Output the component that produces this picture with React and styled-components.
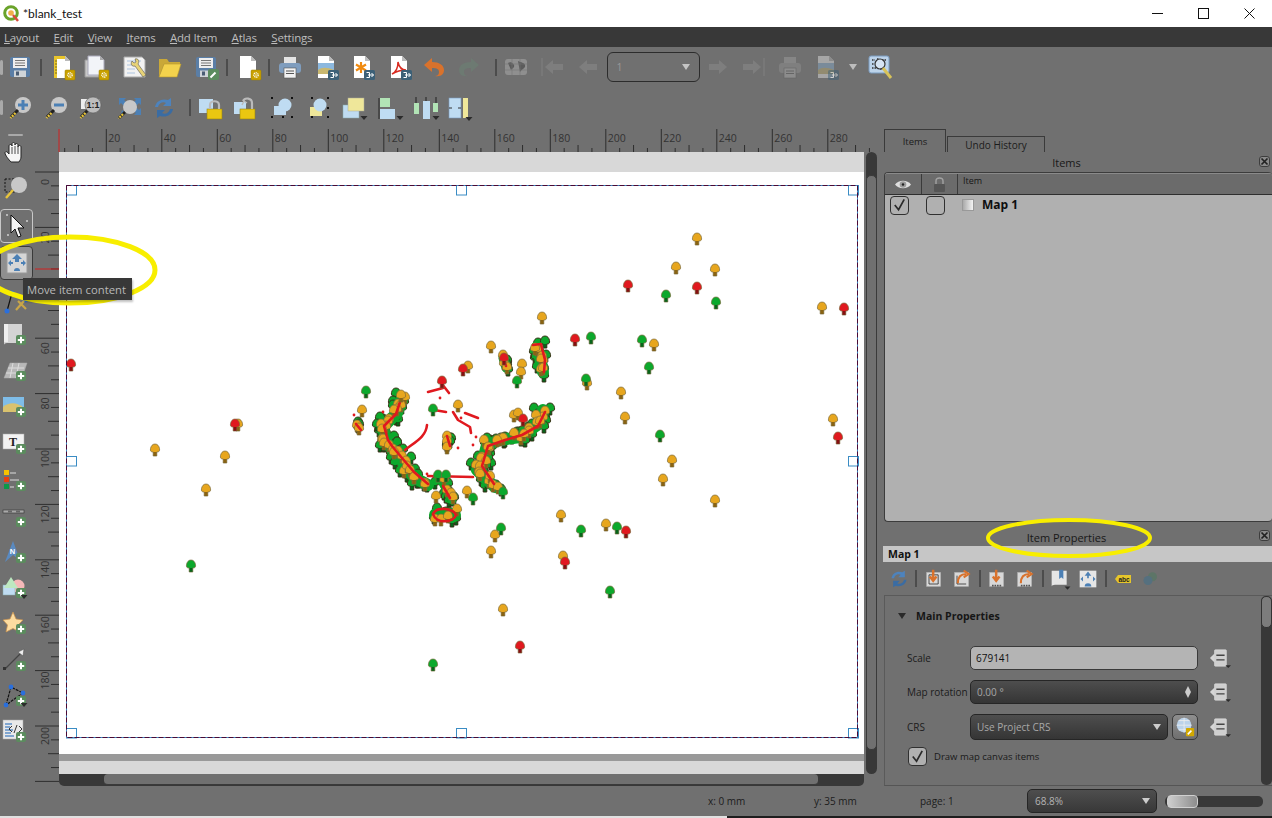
import React from "react";
import styled, { createGlobalStyle } from "styled-components";

const Global = createGlobalStyle`
  html, body { margin: 0; padding: 0; background: #707070; }
  body { font-family: "Open Sans", "Noto Sans", "Liberation Sans", sans-serif; }
  * { box-sizing: border-box; }
`;

const Root = styled.div`
  position: relative; width: 1272px; height: 818px; overflow: hidden;
  background: #707070; display: flex; flex-direction: column;
`;
const TitleBar = styled.header`
  height: 27px; background: #fff; display: flex; align-items: center; padding-left: 3px; flex: none;
`;
const TitleText = styled.span`
  font-size: 12px; color: #111; margin-left: 3px; flex: 1; font-family: "Lato", "Open Sans", sans-serif;
`;
const WinButton = styled.div`
  width: 46px; height: 27px; display: flex; align-items: center; justify-content: center;
`;
const MenuBar = styled.nav`
  height: 20px; background: #383838; display: flex; align-items: center; gap: 14.5px; padding-left: 4px; flex: none;
`;
const MenuItem = styled.span`
  font-size: 11.5px; color: #bdbdbd; letter-spacing: -0.2px;
  &::first-letter { text-decoration: underline; }
`;
const ToolRow = styled.div`
  height: ${(p) => p.$h}px; display: flex; align-items: center; flex: none;
`;
const ToolCol = styled.div`
  width: 35px; flex: none; display: flex; flex-direction: column; align-items: flex-start; padding-left: 3px;
`;
const Cell = styled.div`
  width: ${(p) => p.$w}px; height: ${(p) => p.$h}px; flex: none;
  margin-left: ${(p) => p.$ml || 0}px; margin-top: ${(p) => p.$mt || 0}px;
  display: flex; align-items: center; justify-content: center;
`;
const Sep = styled.div`
  width: 2px; height: 17px; background: #4c4c4c; flex: none; margin-left: ${(p) => p.$ml}px;
`;
const Handle = styled.div`
  width: ${(p) => p.$w}px; height: ${(p) => p.$h}px; background: #a9a9a9; border-radius: 2px; flex: none;
  margin-left: ${(p) => p.$ml || 0}px; margin-top: ${(p) => p.$mt || 0}px;
`;
const PageCombo = styled.div`
  width: 93px; height: 30px; flex: none; margin-left: ${(p) => p.$ml}px; border: 1px solid #2c2c2c; border-radius: 6px;
  display: flex; align-items: center; justify-content: space-between; padding: 0 9px;
  font-size: 10.5px; color: #999;
`;
const ActiveTool = styled.div`
  width: 33px; height: 34px; flex: none; margin-left: -3px; margin-top: ${(p) => p.$mt || 0}px;
  border: 1px solid ${(p) => p.$border}; border-radius: 4px; background: ${(p) => p.$bg};
  display: flex; align-items: center; justify-content: center;
`;
const Body = styled.div`
  height: 658px; display: flex; flex: none;
`;
const Work = styled.div`
  width: 848px; flex: none; display: flex; flex-direction: column;
`;
const RulerTop = styled.svg`
  display: block; width: 848px; height: 24px; flex: none;
`;
const WorkMid = styled.div`
  display: flex; flex: none; height: 622px;
`;
const RulerLeft = styled.svg`
  display: block; width: 24px; height: 634px; flex: none;
`;
const Canvas = styled.div`
  width: 805px; height: 622px; flex: none; display: flex; flex-direction: column;
`;
const Band = styled.div`
  height: ${(p) => p.$h}px; background: ${(p) => p.$c}; flex: none;
`;
const Page = styled.div`
  height: 582px; background: #fff; flex: none;
`;
const MapSvg = styled.svg`
  display: block; width: 805px; height: 582px;
`;
const VScrollTrack = styled.div`
  width: 11px; height: 622px; flex: none; margin-left: 2px; background: #383838; border-radius: 6px; padding-top: 23px;
`;
const VThumb = styled.div`
  height: 575px; background: #707070; border: 1px solid #3a3a3a; border-radius: 5px;
`;
const HRow = styled.div`
  display: flex; height: 12px; margin-left: 24px; flex: none;
`;
const HTrack = styled.div`
  width: 805px; height: 12px; background: #383838; border-radius: 0 0 5px 5px; padding-left: 45px;
`;
const HThumb = styled.div`
  width: 714px; height: 11px; background: #707070; border-radius: 4px; border-bottom: 1px solid #3a3a3a;
`;
const Dock = styled.aside`
  width: 389px; flex: none; display: flex; flex-direction: column;
`;
const Tabs = styled.div`
  height: 24px; display: flex; align-items: flex-end; padding-left: 1px; flex: none;
`;
const Tab = styled.div`
  width: ${(p) => p.$w}px; height: ${(p) => p.$h}px; border: 1px solid #3a3a3a; border-bottom: 0; margin-right: ${(p) => p.$mr || 0}px;
  display: flex; align-items: center; justify-content: center; font-size: ${(p) => p.$fs}px; color: #1c1c1c;
`;
const DockTitle = styled.div`
  height: ${(p) => p.$h}px; display: flex; align-items: center; justify-content: center; position: relative; flex: none;
  font-size: 11px; color: #181818; padding-right: 22px; padding-top: ${(p) => p.$pt || 0}px;
`;
const CloseBtn = styled.div`
  position: absolute; right: 2px; top: ${(p) => p.$t}px; width: 11px; height: 11px; border: 1px solid #3d3d3d; border-radius: 3px;
  background: #8a8a8a; display: flex; align-items: center; justify-content: center;
`;
const ListBox = styled.div`
  height: 350px; margin-left: 1px; flex: none; background: #b0b0b0; border: 1px solid #3c3c3c; border-right: 0;
  border-radius: 4px; overflow: hidden; display: flex; flex-direction: column;
`;
const ListHead = styled.div`
  height: 22px; flex: none; background: #6b6b6b; display: grid; grid-template-columns: 37px 36px 1fr;
  border-bottom: 1px solid #2e2e2e; border-top: 1px solid #8a8a8a;
`;
const HeadCell = styled.div`
  border-right: 1px solid #3a3a3a; display: flex; align-items: ${(p) => (p.$text ? "flex-start" : "center")}; justify-content: ${(p) => (p.$text ? "flex-start" : "center")};
  font-size: 9px; color: #161616; padding-left: ${(p) => (p.$text ? "5px" : "0")};
  &:last-child { border-right: 0; }
`;
const ListRow = styled.div`
  display: flex; align-items: center; height: 20px; padding-left: 4px;
`;
const Check = styled.div`
  width: ${(p) => p.$s}px; height: ${(p) => p.$s}px; border: 1px solid #303030; border-radius: 4px;
  display: flex; align-items: center; justify-content: center; flex: none; margin-left: ${(p) => p.$ml || 0}px;
  background: ${(p) => p.$bg || "transparent"};
`;
const MapIconBox = styled.div`
  width: 12px; height: 12px; margin-left: 17px; flex: none; border: 1px solid #999;
  background: linear-gradient(90deg, #aaa, #f4f4f4);
`;
const RowLabel = styled.span`
  font-size: 12px; font-weight: 700; color: #0e0e0e; margin-left: 8px; margin-bottom: 2px; font-family: "Open Sans", sans-serif;
`;
const MapBand = styled.div`
  height: 16px; flex: none; background: #c6c6c6; font-size: 10.5px; font-weight: 700; color: #111; display: flex; align-items: center; padding-left: 5px;
`;
const PropBar = styled.div`
  height: 33px; flex: none; display: flex; align-items: center;
`;
const PropGroup = styled.div`
  height: 191px; margin-left: 1px; flex: none; border: 1px solid #5a5a5a; border-right: 0; border-bottom-color: #555; display: flex;
`;
const PropBody = styled.div`
  width: 376px; flex: none; display: flex; flex-direction: column; padding: 12px 0 0 12px;
`;
const GroupHead = styled.div`
  display: flex; align-items: center; gap: 10px; font-size: 10.5px; font-weight: 700; color: #161616; height: 16px; margin-bottom: 22px; padding-left: 1px;
`;
const Tri = styled.div`
  width: 0; height: 0; border-left: 4.5px solid transparent; border-right: 4.5px solid transparent;
  border-top: 6px solid ${(p) => p.$c || "#222"};
`;
const FormRow = styled.div`
  display: flex; align-items: center; height: ${(p) => p.$h}px; margin-bottom: ${(p) => p.$mb}px;
`;
const FormLabel = styled.span`
  width: 63px; flex: none; font-size: 10px; color: #1c1c1c; white-space: nowrap; margin-left: 10px;
`;
const Input = styled.div`
  width: 228px; height: 24px; flex: none; border-radius: 5px; border: 1px solid #3a3a3a; background: #b4b4b4;
  font-size: 10px; color: #111; display: flex; align-items: center; padding-left: 5px;
`;
const DarkField = styled.div`
  width: ${(p) => p.$w}px; height: ${(p) => p.$h}px; flex: none; border-radius: 5px; border: 1px solid #262626;
  background: linear-gradient(#4e4e4e, #353535); font-size: 10px; color: #a8a8a8;
  display: flex; align-items: center; justify-content: space-between; padding: 0 6px;
`;
const SmallBtn = styled.div`
  width: 26px; height: 26px; flex: none; margin-left: 4px; border-radius: 5px; border: 1px solid #3a3a3a;
  background: linear-gradient(#8e8e8e, #6f6f6f); display: flex; align-items: center; justify-content: center;
`;
const DdIcon = styled.div`
  width: 24px; height: 24px; flex: none; margin-left: ${(p) => p.$ml}px; display: flex; align-items: center; justify-content: center;
`;
const CheckRow = styled.div`
  display: flex; align-items: center; font-size: 9.5px; color: #1a1a1a; gap: 7px; margin-left: 11px;
`;
const InnerScroll = styled.div`
  width: 11px; height: 189px; flex: none; background: #383838; border-radius: 5px;
`;
const InnerThumb = styled.div`
  height: 32px; background: #7c7c7c; border: 1px solid #333; border-radius: 5px;
`;
const StatusBar = styled.footer`
  height: 30px; flex: none; display: flex; align-items: center; font-size: 10px; color: #1c1c1c;
`;
const StatusText = styled.span`
  width: ${(p) => p.$w}px; flex: none; margin-left: ${(p) => p.$ml || 0}px; white-space: nowrap;
`;
const ZoomCombo = styled.div`
  width: 130px; height: 24px; flex: none; border-radius: 5px; border: 1px solid #262626; background: linear-gradient(#4e4e4e, #383838);
  font-size: 10px; color: #b4b4b4; display: flex; align-items: center; justify-content: space-between; padding: 0 6px 0 7px;
`;
const SliderTrack = styled.div`
  width: 98px; height: 11px; flex: none; margin-left: 8px; background: #383838; border-radius: 5px; display: flex; align-items: center;
`;
const SliderThumb = styled.div`
  width: 31px; height: 13px; flex: none; margin-left: 2px; border: 1px solid #d0d0d0; border-radius: 4px; background: linear-gradient(90deg, #cfcfcf, #8d8d8d);
`;
const BottomEdge = styled.div`
  height: 2px; flex: none; display: flex;
`;
const EdgePart = styled.div`
  background: ${(p) => p.$c}; width: ${(p) => p.$w}; flex: ${(p) => (p.$w ? "none" : 1)};
`;
const Overlay = styled.svg`
  position: absolute; left: 0; top: 0; width: 1272px; height: 818px; pointer-events: none;
`;
const Tooltip = styled.div`
  position: absolute; left: 23px; top: 278px; width: 109px; height: 22px; background: #383838; color: #b8b8b8; font-size: 11.3px;
  display: flex; align-items: center; padding-left: 4px; white-space: nowrap; box-shadow: 1px 2px 2px rgba(0,0,0,.25);
`;

/* ---------- icons ---------- */
const I = ({ s = 24, children, vb = "0 0 24 24" }) => (
  <svg width={s} height={s} viewBox={vb} style={{ display: "block", overflow: "visible" }}>{children}</svg>
);
const CogBadge = () => (
  <g>
    <rect x="15" y="15" width="10" height="10" rx="1" fill="#c9a100" stroke="#9a7d00" strokeWidth=".5" />
    <circle cx="20" cy="20" r="2.2" fill="none" stroke="#fff" strokeWidth="1.3" strokeDasharray="1.2 .6" />
    <circle cx="20" cy="20" r=".7" fill="#fff" />
  </g>
);
const ExportBadge = () => (
  <g>
    <rect x="14" y="15" width="11" height="10" rx="1.5" fill="#3c6077" />
    <path d="M16.5 17.5h3v5h-3M18 20h5.5M21.5 18l2 2-2 2" fill="none" stroke="#fff" strokeWidth="1" />
  </g>
);
const PlusBadge = ({ x = 18, y = 17 }) => (
  <g transform={`translate(${x} ${y})`}>
    <rect x="-5" y="-5" width="10" height="10" rx="2" fill="#5b8c5e" />
    <path d="M0-3.2v6.4M-3.2 0h6.4" stroke="#fff" strokeWidth="2" />
  </g>
);
const Caret = ({ x = 21, y = 22 }) => <path d={`M${x - 3.5} ${y - 2}h7l-3.5 4z`} fill="#2b2b2b" />;
const PageShape = ({ fill = "#fff", stroke = "none" }) => (
  <path d="M4 1h11l5 5v17H4z" fill={fill} stroke={stroke} />
);
const FloppyShape = () => (
  <g>
    <rect x="2" y="2" width="20" height="20" rx="2" fill="#5a7ea6" />
    <rect x="5" y="3" width="14" height="10" fill="#eee" />
    <path d="M7 5.5h10M7 8h10M7 10.5h10" stroke="#777" strokeWidth="1" />
    <rect x="6" y="15.5" width="12" height="6.5" fill="#cfd4d8" />
    <rect x="8" y="16.5" width="3" height="4" fill="#4a5d75" />
  </g>
);
const Floppy = () => <I><FloppyShape /></I>;
const FloppyEdit = () => (
  <I><FloppyShape /><rect x="14" y="14" width="11" height="11" rx="2" fill="#5b8c5e" /><path d="M16.5 22.5l5-5" stroke="#fff" strokeWidth="2" /></I>
);
const NewLayout = () => (
  <I><PageShape /><path d="M4 1h3v22H4z" fill="#e8c52c" /><path d="M4 1h11v3H4z" fill="#e8c52c" /><path d="M15 1l5 5h-5z" fill="#bbb" /><path d="M5 6h2M5 9h2M5 12h2M5 15h2M5 18h2" stroke="#7a6c1a" /><CogBadge /></I>
);
const DupLayout = () => (
  <I><path d="M1 5h14v17H1z" fill="#c8c8c8" stroke="#999" /><path d="M4 1h12l4 4v15H4z" fill="#f2f4f8" stroke="#aab" /><path d="M16 1l4 4h-4z" fill="#aaa" /><CogBadge /></I>
);
const Manager = () => (
  <I><path d="M1 2h18l3 3v17H1z" fill="#f2f2f2" stroke="#aaa" /><path d="M4 6h14M4 10h8M4 14h8M4 18h8" stroke="#c3d3e6" strokeWidth="1.5" /><path d="M9 6c-2 3 0 6 3 5l8 11 3-2-8-11c2-3 0-6-3-5l1 3-2 1z" fill="#e7d377" stroke="#555" strokeWidth=".6" /></I>
);
const Folder = () => (
  <I><path d="M1 4h8l2 3h11v2H6L1 22z" fill="#c9a838" /><path d="M6 9h17l-4 13H1z" fill="#f3d24d" stroke="#b9982c" strokeWidth=".6" /></I>
);
const BlankCog = () => (
  <I><PageShape /><path d="M15 1l5 5h-5z" fill="#bbb" /><CogBadge /></I>
);
const Printer = ({ dim }) => (
  <I>
    <g opacity={dim ? 0.38 : 1}>
      <rect x="6" y="2" width="12" height="7" fill={dim ? "#aaa" : "#e4e4e4"} />
      <rect x="1" y="8" width="22" height="10" rx="3" fill={dim ? "#999" : "#7f9dbe"} />
      <rect x="6" y="13" width="12" height="10" fill={dim ? "#bbb" : "#f2f2f2"} stroke="#555" strokeWidth=".6" />
      <path d="M8 16h8M8 18.5h8" stroke="#555" />
    </g>
  </I>
);
const ExportImg = ({ dim }) => (
  <I>
    <g opacity={dim ? 0.38 : 1}>
      <PageShape />
      <path d="M15 1l5 5h-5z" fill="#bbb" />
      <rect x="4" y="8" width="16" height="11" fill="#8cb8de" />
      <path d="M4 19v-4c4-3 9-3 16 0v4z" fill="#c9b870" />
    </g>
    <g opacity={dim ? 0.5 : 1}><ExportBadge /></g>
  </I>
);
const ExportSvg = () => (
  <I><PageShape /><path d="M15 1l5 5h-5z" fill="#bbb" /><path d="M11 7v11M6 9.5l10 6M16 9.5l-10 6" stroke="#f08a10" strokeWidth="2.2" /><ExportBadge /></I>
);
const ExportPdf = () => (
  <I><PageShape /><path d="M15 1l5 5h-5z" fill="#bbb" /><path d="M5 19c4-2 6-7 6-12 1 5 3 8 8 8-5 0-9 1-14 4z" fill="none" stroke="#d92b20" strokeWidth="1.5" /><ExportBadge /></I>
);
const Undo = () => (
  <I><path d="M10 3L2 10l8 7v-4c5 0 7 1 7 4s-2 4-4 4c6 1 9-2 9-6 0-5-5-8-12-8z" fill="#d9722c" /></I>
);
const Redo = () => (
  <I><path d="M14 3l8 7-8 7v-4c-5 0-7 1-7 4s2 4 4 4c-6 1-9-2-9-6 0-5 5-8 12-8z" fill="#6d7a72" /></I>
);
const WorldDim = () => (
  <I><rect x="1" y="4" width="22" height="16" rx="3" fill="#8f8f8f" /><path d="M4 8c3-2 5 0 6 2s-2 4-3 5M14 6c3 2 6 1 7 4s-3 4-5 7" fill="#5b5b5b" /><path d="M1 9h22M1 15h22M8 4v16M16 4v16" stroke="#777" strokeWidth=".6" /></I>
);
const Arrow = ({ dir, bar }) => {
  const left = dir === "l";
  return (
    <I>
      <g transform={left ? "" : "matrix(-1 0 0 1 24 0)"}>
        <path d="M3 12l8-7v4h10v6H11v4z" fill="#7e7e7e" />
        {bar && <path d="M0 3v18" stroke="#808080" strokeWidth="1" />}
      </g>
    </I>
  );
};
const DownTri = ({ c = "#c9c9c9", s = 6 }) => (
  <svg width={s + 2} height={s} viewBox="0 0 8 6" style={{ display: "block" }}><path d="M0 0h8L4 6z" fill={c} /></svg>
);
const AtlasGlass = () => (
  <I><rect x="1" y="1" width="20" height="17" rx="2" fill="#bcd3ea" stroke="#7a9cc0" /><path d="M4 5h3M9 4h2M4 9h2M14 5h4M4 13h4M12 14h3" stroke="#333" strokeWidth="1.4" strokeDasharray="1.5 1" /><circle cx="12" cy="9" r="5" fill="#e8f0f8" fillOpacity=".6" stroke="#333" strokeWidth="1.2" /><path d="M15 13l8 10" stroke="#d8c35a" strokeWidth="3" /></I>
);
const Glass = ({ children }) => (
  <I>
    <circle cx="14" cy="9" r="8" fill="#c8c8c8" />
    <path d="M9 14l-7 7" stroke="#222" strokeWidth="3" />
    <path d="M6.5 17l-5 5" stroke="#e9c53a" strokeWidth="2.4" strokeDasharray="2 1" />
    {children}
  </I>
);
const ZoomIn = () => <Glass><path d="M14 4v10M9 9h10" stroke="#4c80b5" strokeWidth="3" /></Glass>;
const ZoomOut = () => <Glass><path d="M9 9h10" stroke="#4c80b5" strokeWidth="3" /></Glass>;
const Zoom11 = () => (
  <Glass><rect x="2" y="3" width="9" height="10" fill="#eee" /><circle cx="14" cy="9" r="8" fill="#bdbdbd" stroke="#555" strokeWidth=".6" /><text x="14" y="12" fontSize="9" fontWeight="700" textAnchor="middle" fill="#222" fontFamily="Liberation Sans">1:1</text></Glass>
);
const ZoomFull = () => (
  <I>
    <path d="M2 2h7L7 4l3 3-3 3-3-3-2 2zM24 2v7l-2-2-3 3-3-3 3-3-2-2zM24 19h-7l2-2-3-3 3-3 3 3 2-2zM5 14l3 3-5 5" fill="#4c80b5" />
    <circle cx="13" cy="11" r="7" fill="#c8c8c8" />
    <path d="M8 16l-6 6" stroke="#222" strokeWidth="2.6" />
    <path d="M6 18l-4.5 4.5" stroke="#e9c53a" strokeWidth="2.2" strokeDasharray="2 1" />
  </I>
);
const Refresh = ({ s = 24 }) => (
  <I s={s}>
    <path d="M3 11C4 5 10 2 16 4l3-2v8h-8l3-3C11 5 7 7 6 11z" fill="#4d83bd" />
    <path d="M21 13c-1 6-7 9-13 7l-3 2v-8h8l-3 3c3 2 7 0 8-4z" fill="#3a6ca3" />
  </I>
);
const Lock = () => (
  <I><rect x="1" y="3" width="14" height="14" fill="#bfdcf2" /><rect x="9" y="13" width="15" height="10" fill="#eac711" stroke="#9a8510" strokeWidth=".6" /><path d="M12 13V9c0-5 9-5 9 0v4" fill="none" stroke="#bbb" strokeWidth="2.2" /></I>
);
const Unlock = () => (
  <I><rect x="0" y="6" width="12" height="12" fill="#bfdcf2" /><rect x="6" y="13" width="15" height="10" fill="#eac711" stroke="#9a8510" strokeWidth=".6" /><path d="M9 5c2-4 9-3 9 2v6" fill="none" stroke="#bbb" strokeWidth="2.2" /><path d="M8 9l2-4 3 2" fill="none" stroke="#bbb" strokeWidth="1.5" /></I>
);
const SelectAll = () => (
  <I><circle cx="15" cy="9" r="6.5" fill="#bfdcf2" /><rect x="4" y="10" width="12" height="9" fill="#bfdcf2" /><g fill="#111"><rect x="1" y="1" width="2" height="2" /><rect x="21" y="1" width="2" height="2" /><rect x="1" y="20" width="2" height="2" /><rect x="21" y="20" width="2" height="2" /><rect x="12" y="20" width="2" height="2" /></g></I>
);
const SelectNext = () => (
  <I><rect x="4" y="11" width="12" height="9" fill="#efe79a" /><circle cx="14" cy="9" r="6.5" fill="#bfdcf2" /><g fill="#111"><rect x="5" y="1" width="2" height="2" /><rect x="21" y="1" width="2" height="2" /><rect x="5" y="20" width="2" height="2" /><rect x="21" y="20" width="2" height="2" /><rect x="21" y="11" width="2" height="2" /></g></I>
);
const Raise = () => (
  <I><rect x="1" y="9" width="16" height="13" fill="#bfdcf2" stroke="#8aa" strokeWidth=".5" /><rect x="6" y="2" width="16" height="13" fill="#efe79a" stroke="#aa9" strokeWidth=".5" /><Caret x={22} y={22} /></I>
);
const AlignL = () => (
  <I><path d="M2 2v21" stroke="#222" /><rect x="3" y="2" width="10" height="9" fill="#b2e4b6" /><rect x="3" y="13" width="15" height="10" fill="#bfdcf2" /><Caret x={23} y={22} /></I>
);
const Dist = () => (
  <I><path d="M2 1v8M12 1v8M22 1v8" stroke="#222" /><rect x="0" y="7" width="5" height="11" fill="#b2e4b6" /><rect x="9" y="5" width="7" height="18" fill="#bfdcf2" /><rect x="19" y="7" width="5" height="9" fill="#b2e4b6" /><Caret x={22} y={22} /></I>
);
const ResizeI = () => (
  <I><rect x="0" y="2" width="12" height="20" fill="#bfdcf2" stroke="#7a9cc0" strokeWidth=".6" /><rect x="14" y="2" width="5" height="20" fill="#efe79a" /><path d="M0 12h3M9 12h3" stroke="#333" /><Caret x={20} y={23} /></I>
);
const Hand = () => (
  <I><path d="M8 21c-2-2-6-7-6-9s2-2 4 1V5c0-2 3-2 3 0V3c0-2 3-2 3 0v1c0-2 3-2 3 0v2c0-2 3-2 3 0v10c0 2-1 3-2 5z" fill="#f5f5f5" stroke="#222" strokeWidth="1" /><path d="M9 6v7M12 5v8M15 6v7" stroke="#222" strokeWidth=".8" /></I>
);
const ZoomDash = () => (
  <I>
    <rect x="2" y="3" width="14" height="13" fill="none" stroke="#111" strokeDasharray="2 1.5" />
    <circle cx="16" cy="9" r="8" fill="#c8c8c8" />
    <path d="M10 14l-7 8" stroke="#e9c53a" strokeWidth="2.4" />
  </I>
);
const Pointer = () => (
  <I><path d="M6 1v18l4-4 3 8 3-1-3-8h6z" fill="#f6f6f6" stroke="#111" strokeWidth="1" /><path d="M1 1h2M21 7h2M2 21h2" stroke="#fff" strokeWidth="1.2" /></I>
);
const MoveContent = () => (
  <I>
    <rect x="2" y="2" width="20" height="20" fill="#d6d6d6" stroke="#999" />
    <path d="M12 3l5 5h-3v3h-4V8H7z" fill="#4c80b5" />
    <path d="M3 12l3-3v2h2v2H6v2zM21 12l-3-3v2h-2v2h2v2zM9 20a3 3 0 016 0z" fill="#4c80b5" />
  </I>
);
const EditNodes = () => (
  <I>
    <path d="M4 22L9 4l13 7" fill="none" stroke="#111" strokeWidth="1.2" />
    <circle cx="9" cy="4" r="2.5" fill="#2a6fdc" /><circle cx="4" cy="22" r="2.5" fill="#2a6fdc" /><circle cx="22" cy="11" r="2.5" fill="#2a6fdc" />
    <path d="M13 21l8-9M15 12l8 8" stroke="#c9a648" strokeWidth="2.2" />
  </I>
);
const AddMap = () => (
  <I><path d="M1 1h18v19H4c-2 0-3 1-3 2z" fill="#d4d4d4" /><path d="M1 1h4v18H1z" fill="#eeeeee" /><PlusBadge /></I>
);
const Add3d = () => (
  <I><path d="M7 4h15l2 0-5 15H1z" fill="#b8b8b8" stroke="#aaa" strokeWidth=".5" /><path d="M5 9h16M3 14h16M10 4l-3 15M16 4l-3 15" stroke="#ddd" /><PlusBadge /></I>
);
const AddPic = () => (
  <I><rect x="0" y="2" width="21" height="15" fill="#7fbde8" /><path d="M0 17v-5c6-5 14-5 21 1v4z" fill="#d9c26e" /><PlusBadge /></I>
);
const AddLabel = () => (
  <I><rect x="0" y="2" width="21" height="15" fill="#f2f2f2" stroke="#aaa" strokeWidth=".5" /><text x="10" y="14" fontSize="12" fontWeight="700" textAnchor="middle" fill="#222" fontFamily="Liberation Serif">T</text><PlusBadge /></I>
);
const AddLegend = () => (
  <I><rect x="1" y="1" width="5" height="5" fill="#f7c200" /><rect x="1" y="8" width="5" height="5" fill="#e83c10" /><rect x="1" y="15" width="5" height="5" fill="#0a9a48" /><path d="M7 4h6M7 11h9M7 18h4" stroke="#a6a6a6" strokeWidth="2" /><PlusBadge /></I>
);
const AddScale = () => (
  <I><rect x="0" y="5" width="21" height="3" fill="#a9a9a9" stroke="#333" strokeWidth=".6" /><path d="M5 6.5h4M13 6.5h4" stroke="#666" strokeWidth="2" /><PlusBadge /></I>
);
const AddNorth = () => (
  <I><path d="M10 0l7 19-7-5-8 7z" fill="#5a8ac0" /><text x="9.5" y="13" fontSize="7.5" fontWeight="700" textAnchor="middle" fill="#fff" fontFamily="Liberation Sans">N</text><PlusBadge /></I>
);
const AddShape = () => (
  <I><circle cx="15" cy="10" r="6.5" fill="#f5b8b8" /><rect x="0" y="9" width="12" height="10" fill="#bfdcf2" stroke="#8aa" strokeWidth=".5" /><path d="M8 1l7 11H1z" fill="#bde8c0" /><PlusBadge /><Caret x={21} y={21} /></I>
);
const AddStar = () => (
  <I><path d="M10 0l3 7 7 1-5 5 1.500 7-6.500-3.500L3 20l1.500-7L0 8l7-1z" fill="#fcdca0" stroke="#c9904c" strokeWidth=".7" /><PlusBadge /></I>
);
const AddArrow = () => (
  <I><path d="M2 20L18 4" stroke="#444" strokeWidth="1.2" /><rect x="0" y="18" width="3" height="3" fill="#333" /><path d="M21 0l-1 7-5-4z" fill="#eee" stroke="#555" strokeWidth=".6" /><PlusBadge /></I>
);
const AddNodes = () => (
  <I><path d="M3 21L8 3l12 6z" fill="none" stroke="#111" strokeWidth="1.2" strokeDasharray="3 1" /><circle cx="8" cy="3" r="2.4" fill="#2a6fdc" /><circle cx="3" cy="21" r="2.4" fill="#2a6fdc" /><circle cx="20" cy="9" r="2.4" fill="#2a6fdc" /><PlusBadge /><Caret x={21} y={21} /></I>
);
const AddHtml = () => (
  <I><rect x="0" y="0" width="20" height="19" fill="#e9e9e9" stroke="#aaa" strokeWidth=".5" /><path d="M2 4h7M2 7h5M2 10h8M2 13h6M2 16h9" stroke="#5f90c8" strokeWidth="1.6" /><path d="M9 6l-3 3 3 3M14 5l-3 8M16 6l3 3-3 3" fill="none" stroke="#222" strokeWidth=".9" /><PlusBadge /></I>
);
const DataDefined = () => (
  <I s={22}>
    <path d="M6 7L1 12l5 5z" fill="#d6d6d6" />
    <rect x="6" y="3" width="13" height="18" rx="1" fill="#cfcfcf" stroke="#eee" strokeWidth=".5" />
    <path d="M8 9h9M8 14h9" stroke="#444" strokeWidth="1.4" />
    <path d="M18 20h6l-3 3z" fill="#2b2b2b" />
  </I>
);
const Eye = () => (
  <svg width="16" height="11" viewBox="0 0 16 11"><path d="M0 5.500C3 1 12 0 16 5.500 12 11 3 10 0 5.500z" fill="#dedede" /><circle cx="8" cy="5.500" r="3.300" fill="#9a9a9a" /><circle cx="8" cy="5.500" r="1.200" fill="#222" /></svg>
);
const HeadLock = () => (
  <svg width="13" height="15" viewBox="0 0 13 15"><path d="M3 7V4c0-4 7-4 7 0v3" fill="none" stroke="#a2a2a2" strokeWidth="1.4" /><rect x="1" y="7" width="11" height="8" rx="1" fill="#555" /></svg>
);
const Tick = ({ s = 18 }) => (
  <svg width={s} height={s} viewBox="0 0 18 18"><path d="M4 9l4 5 6-11" fill="none" stroke="#2a2a2a" strokeWidth="1.8" /></svg>
);
const XIcon = () => (
  <svg width="9" height="9" viewBox="0 0 9 9"><path d="M1.500 1.500l6 6M7.500 1.500l-6 6" stroke="#222" strokeWidth="1.700" /></svg>
);
const Logo = () => (
  <svg width="17" height="18" viewBox="0 0 17 18">
    <circle cx="8" cy="8" r="6.300" fill="#fff" stroke="#6aa32a" strokeWidth="3" />
    <circle cx="8" cy="8" r="2.800" fill="#f0b04a" />
    <path d="M10 10l5 6" stroke="#d94b3c" strokeWidth="2.500" />
  </svg>
);
const PropIcon = ({ k }) => {
  const frame = <rect x="3" y="4" width="17" height="17" fill="#d8d8d8" stroke="#aaa" strokeWidth=".5" />;
  if (k === "a") return <I s={20}>{frame}<path d="M6 7h11v11H6z" fill="none" stroke="#333" /><path d="M11 1v11M7 9l4 5 4-5" stroke="#d9722c" strokeWidth="3" fill="none" /></I>;
  if (k === "b") return <I s={20}>{frame}<path d="M6 8v10h11" fill="none" stroke="#333" /><path d="M7 17c0-8 4-11 10-11M14 2l6 4-6 4" stroke="#d9722c" strokeWidth="2.500" fill="none" /></I>;
  if (k === "c") return <I s={20}>{frame}<path d="M6 20h12" stroke="#555" strokeWidth="2" strokeDasharray="2 1" /><path d="M11 1v11M7 9l4 5 4-5" stroke="#d9722c" strokeWidth="3" fill="none" /></I>;
  if (k === "d") return <I s={20}>{frame}<path d="M7 20h12" stroke="#555" strokeWidth="2" strokeDasharray="2 1" /><path d="M7 17c0-8 4-11 10-11M14 2l6 4-6 4" stroke="#d9722c" strokeWidth="2.500" fill="none" /></I>;
  if (k === "e") return <I s={20}><path d="M2 2h18v17H6c-2 0-4 1-4 2z" fill="#e6e6e6" /><path d="M11 1h5v11l-2.500-2-2.500 2z" fill="#4c80b5" /><Caret x={21} y={23} /></I>;
  if (k === "f") return <I s={20}><rect x="2" y="2" width="20" height="20" fill="#e6e6e6" /><path d="M12 3l4 5h-3v3h-2V8H8zM3 12l3-3v6zM21 12l-3-3v6zM8 21a4 4 0 018 0z" fill="#4c80b5" /></I>;
  if (k === "g") return <svg width="16" height="10" viewBox="0 0 16 10"><path d="M3 1h13v8H3L0 5z" fill="#e6c62a" /><text x="9" y="7.500" fontSize="6.500" fontWeight="700" textAnchor="middle" fill="#222" fontFamily="Liberation Sans">abc</text></svg>;
  return <I s={18}><circle cx="14" cy="9" r="6" fill="#5d7567" /><circle cx="8" cy="14" r="6" fill="#55707f" /></I>;
};
const CrsBtn = () => (
  <I s={22}>
    <circle cx="11" cy="10" r="8" fill="#bcd3ea" />
    <path d="M3 10h16M11 2v16M5 5h12M5 15h12" stroke="#eee" strokeWidth=".9" />
    <rect x="13" y="13" width="9" height="9" rx="1" fill="#d2a800" />
    <path d="M15 20l4-4" stroke="#fff" strokeWidth="1.700" />
  </I>
);

/* place a sequence by screen centre, keeping it in the flow */
const flowRow = (items, start = 0) => {
  let pos = start;
  return items.map((it, i) => {
    const w = it.w || 24;
    const ml = it.c - w / 2 - pos;
    pos = it.c + w / 2;
    if (it.sep) return <Sep key={i} $ml={ml} />;
    if (it.handle) return <Handle key={i} $w={3} $h={15} $ml={ml} />;
    if (it.combo) return (
      <PageCombo key={i} $ml={ml}><span>1</span><DownTri c="#c4c4c4" /></PageCombo>
    );
    return <Cell key={i} $w={w} $h={26} $ml={ml}>{it.n}</Cell>;
  });
};

const top1 = [
  { c: 1, w: 2, handle: 1 }, { c: 19, n: <Floppy /> }, { c: 40, w: 2, sep: 1 }, { c: 61, n: <NewLayout /> }, { c: 95, n: <DupLayout /> },
  { c: 134, n: <Manager /> }, { c: 169, n: <Folder /> }, { c: 205, n: <FloppyEdit /> }, { c: 226, w: 2, sep: 1 },
  { c: 247, n: <BlankCog /> }, { c: 268, w: 2, sep: 1 }, { c: 289, n: <Printer /> }, { c: 325, n: <ExportImg /> },
  { c: 361, n: <ExportSvg /> }, { c: 398, n: <ExportPdf /> }, { c: 433, n: <Undo /> }, { c: 468, n: <Redo /> },
  { c: 495, w: 2, sep: 1 }, { c: 515, n: <WorldDim /> }, { c: 553, n: <Arrow dir="l" bar /> }, { c: 587, n: <Arrow dir="l" /> },
  { c: 652, w: 93, combo: 1 }, { c: 717, n: <Arrow dir="r" /> }, { c: 751, n: <Arrow dir="r" bar /> },
  { c: 789, n: <Printer dim /> }, { c: 825, n: <ExportImg dim /> }, { c: 852, w: 8, n: <DownTri c="#bdbdbd" /> }, { c: 879, n: <AtlasGlass /> },
];
const top2 = [
  { c: 1, w: 2, handle: 1 }, { c: 20, n: <ZoomIn /> }, { c: 56, n: <ZoomOut /> }, { c: 90, n: <Zoom11 /> }, { c: 128, n: <ZoomFull /> }, { c: 163, n: <Refresh /> },
  { c: 189, w: 2, sep: 1 }, { c: 209, n: <Lock /> }, { c: 245, n: <Unlock /> }, { c: 281, n: <SelectAll /> }, { c: 317, n: <SelectNext /> },
  { c: 353, n: <Raise /> }, { c: 388, n: <AlignL /> }, { c: 425, n: <Dist /> }, { c: 460, n: <ResizeI /> },
];

const leftTools = [
  { c: 153, n: <Hand /> }, { c: 188, n: <ZoomDash /> },
];
const leftTools2 = [
  { c: 300, n: <EditNodes /> }, { c: 334, n: <AddMap /> }, { c: 370, n: <Add3d /> }, { c: 406, n: <AddPic /> }, { c: 443, n: <AddLabel /> },
  { c: 480, n: <AddLegend /> }, { c: 516, n: <AddScale /> }, { c: 552, n: <AddNorth /> }, { c: 587, n: <AddShape /> }, { c: 623, n: <AddStar /> },
  { c: 660, n: <AddArrow /> }, { c: 695, n: <AddNodes /> }, { c: 731, n: <AddHtml /> },
];
const flowCol = (items, start) => {
  let pos = start;
  return items.map((it, i) => {
    const mt = it.c - 12 - pos;
    pos = it.c + 12;
    return <Cell key={i} $w={24} $h={24} $mt={mt}>{it.n}</Cell>;
  });
};

/* ---------- rulers ---------- */
const TICK = "#2e2e2e";
const TopRuler = () => {
  const ticks = [];
  const labels = [];
  for (let k = -1; k < 15; k++) {
    const x = 106.3 + k * 55.5 - 35;
    for (let j = 0; j < 4; j++) {
      const tx = x + (j * 55.5) / 4;
      if (tx < 24 || tx > 845) continue;
      const y1 = j === 0 ? 1 : j === 2 ? 17 : 20;
      ticks.push(<line key={`${k}-${j}`} x1={tx} x2={tx} y1={y1} y2={24} stroke={TICK} />);
    }
    if (k >= 0 && k < 14) labels.push(<text key={k} x={x + 2} y={14} fontSize="10.5" fill="#333" fontFamily="Open Sans">{(k + 1) * 20}</text>);
  }
  return (
    <RulerTop viewBox="0 0 848 24">
      {ticks}{labels}
      <line x1="24" x2="24" y1="1" y2="24" stroke="#d02020" />
    </RulerTop>
  );
};
const LeftRuler = () => {
  const ticks = [];
  const labels = [];
  for (let k = 0; k < 12; k++) {
    const y = 20 + k * 55.4;
    for (let j = 0; j < 4; j++) {
      const ty = y + (j * 55.4) / 4;
      if (ty > 631) continue;
      const x1 = j === 0 ? 0 : j === 2 ? 13 : 16;
      ticks.push(<line key={`${k}-${j}`} y1={ty} y2={ty} x1={x1} x2={24} stroke={TICK} />);
    }
    if (k <= 10) labels.push(
      <text key={k} transform={`translate(14 ${y + 10}) rotate(-90)`} textAnchor="middle" fontSize="10.5" fill="#333" fontFamily="Open Sans">{k * 20}</text>
    );
  }
  return (
    <RulerLeft viewBox="0 0 24 634">
      {ticks}{labels}
      <line x1="0" x2="24" y1="117" y2="117" stroke="#d02020" />
    </RulerLeft>
  );
};

/* ---------- map ---------- */
const PIN = "M0-6C2.500-6 4-4 4.500-1.500 5 1 4 2 2 2H1.800V6H-1.800V2H-2C-4 2-5 1-4.500-1.500-4-4-2.500-6 0-6Z";
const O = "#e7a61e", G = "#0ca82c", R = "#e0191f";
const pins = [
  [697,239,O],[676,268,O],[715,270,O],[542,318,O],[491,347,O],[654,345,O],[822,308,O],[468,367,O],[587,384,O],[621,393,O],[625,418,O],
  [514,416,O],[518,414,O],[362,411,O],[833,420,O],[155,450,O],[225,457,O],[206,490,O],[672,461,O],[663,480,O],[715,501,O],[561,516,O],[606,525,O],
  [495,536,O],[491,552,O],[503,610,O],[563,557,O],[436,497,O],[467,492,O],[238,425,O],[522,365,O],[521,373,O],[458,406,O],[401,396,O],
  [666,296,G],[716,303,G],[591,338,G],[642,341,G],[649,368,G],[586,380,G],[366,392,G],[191,566,G],[660,436,G],[610,592,G],[433,665,G],
  [501,529,G],[581,531,G],[617,528,G],[473,499,G],[503,493,G],[433,410,G],[517,382,G],[438,476,G],[446,476,G],
  [628,286,R],[697,288,R],[575,340,R],[844,309,R],[71,365,R],[235,425,R],[838,438,R],[520,647,R],[626,532,R],[565,563,R],[463,370,R],[504,359,R],[442,382,R],[523,420,R],
];
const trails = [
  { j: 10, p: [[402,398],[397,413],[383,427],[387,443],[398,455],[408,470],[415,478],[428,485]] },
  { j: 10, p: [[543,410],[537,425],[520,437],[500,440],[487,445],[483,460],[477,470],[487,480],[495,487]] },
  { j: 10, p: [[537,347],[540,357],[543,372]] },
  { j: 7, p: [[503,358],[506,368]] },
  { j: 7, p: [[443,483],[452,500]] },
  { j: 12, p: [[436,515],[454,515]] },
  { j: 3, p: [[358,425],[358,429]] },
  { j: 4, p: [[448,437],[448,446]] },
];
const toD = (pts) => "M" + pts.map((p) => p.join(" ")).join("L");
const redLines = [
  "M427 425C426 437 415 442 405 450",
  "M428 392L443 388M442 384L449 393",
  "M453 412L458 420L470 427L471 433",
  "M428 476L473 477",
  "M434 410L446 412",
  "M465 413L478 418",
  "M400 402L396 414L384 426L388 440L392 446L402 458L414 472L428 484",
  "M545 412L538 426L522 435L505 440L488 446L482 466L494 484",
  "M533 345L541 344L545 360L544 372",
  "M433 514C436 507 452 507 456 515C454 523 436 524 433 514",
  "M443 486L450 498",
  "M356 424L361 430",
  "M447 436L450 446",
  "M503 356L506 366",
];
const redDots = [[354,415],[458,448],[473,445],[461,418],[440,398],[427,474],[476,437],[383,412]];
const rnd = (i) => { const v = Math.sin(i * 12.9898) * 43758.5453; return v - Math.floor(v); };
const samples = (jitterScale, stepLen) => {
  const out = [];
  let n = Math.round(jitterScale * 100) + 1;
  trails.forEach(({ j, p }) => {
    for (let s = 0; s < p.length - 1; s++) {
      const [x0, y0] = p[s], [x1, y1] = p[s + 1];
      const len = Math.hypot(x1 - x0, y1 - y0);
      const steps = Math.max(1, Math.round(len / stepLen));
      for (let t = 0; t <= steps; t++) {
        const a = t / steps;
        out.push([
          Math.round(x0 + (x1 - x0) * a + (rnd(n++) - 0.5) * 2 * j * jitterScale),
          Math.round(y0 + (y1 - y0) * a + (rnd(n++) - 0.5) * 2 * j * jitterScale),
        ]);
      }
    }
  });
  return out;
};
const Pin = ({ x, y, c, dark }) => (
  <g transform={`translate(${x} ${y})`}>
    <path d={PIN} fill={c} stroke={dark ? "#3b3318" : "#7a6a3c"} strokeWidth={dark ? 1 : 0.7} />
    <rect x="-1.500" y="2" width="3" height="3.800" fill="#000" fillOpacity=".4" />
  </g>
);
const Handles = () => {
  const pts = [[66,185],[456,185],[848,185],[66,456],[848,456],[66,728],[456,728],[848,728]];
  return pts.map(([x, y], i) => <rect key={i} x={x + .5} y={y + .5} width="10" height="9.500" fill="none" stroke="#3a8cc4" />);
};
const MapDrawing = () => (
  <MapSvg viewBox="59 172 805 582">
    {samples(0.75, 2.5).map(([x, y], i) => <Pin key={i} x={x} y={y} c={G} dark />)}
    <g fill="none" strokeLinecap="round" strokeLinejoin="round">
      {trails.map((t, i) => <path key={i} d={toD(t.p)} stroke={G} strokeWidth={t.j + 2} />)}
    </g>
    {samples(0.4, 6).map(([x, y], i) => <Pin key={i} x={x} y={y} c={O} />)}
    <g fill="none" strokeLinecap="round" strokeLinejoin="round">
      {redLines.map((d, i) => <path key={i} d={d} stroke={R} strokeWidth="2.600" />)}
    </g>
    {redDots.map(([x, y], i) => <circle key={i} cx={x} cy={y} r="1.400" fill={R} />)}
    {pins.map(([x, y, c], i) => <Pin key={i} x={x} y={y} c={c} />)}
    <Handles />
    <rect x="66.500" y="185.500" width="791" height="552" fill="none" stroke="#3a8cc4" />
    <rect x="66.500" y="185.500" width="791" height="552" fill="none" stroke="#4a0a36" strokeDasharray="5 2" />
  </MapSvg>
);

const App = () => (
  <Root>
    <Global />
    <TitleBar>
      <Logo />
      <TitleText>*blank_test</TitleText>
      <WinButton><svg width="11" height="11" viewBox="0 0 11 11"><path d="M0 5.500h11" stroke="#111" /></svg></WinButton>
      <WinButton><svg width="11" height="11" viewBox="0 0 11 11"><rect x=".5" y=".5" width="10" height="10" fill="none" stroke="#111" /></svg></WinButton>
      <WinButton><svg width="11" height="11" viewBox="0 0 11 11"><path d="M.5.5l10 10M10.500.5l-10 10" stroke="#111" /></svg></WinButton>
    </TitleBar>
    <MenuBar>
      {["Layout", "Edit", "View", "Items", "Add Item", "Atlas", "Settings"].map((m) => <MenuItem key={m}>{m}</MenuItem>)}
    </MenuBar>
    <ToolRow $h={40}>{flowRow(top1)}</ToolRow>
    <ToolRow $h={41}>{flowRow(top2)}</ToolRow>
    <Body>
      <ToolCol>
        <Handle $w={15} $h={2} $ml={5} $mt={6} />
        {flowCol(leftTools, 136)}
        <ActiveTool $mt={9} $border="#c8c8c8" $bg="transparent"><Pointer /></ActiveTool>
        <ActiveTool $mt={3} $border="#3a3a3a" $bg="#8f8f8f"><MoveContent /></ActiveTool>
        {flowCol(leftTools2, 279)}
      </ToolCol>
      <Work>
        <TopRuler />
        <WorkMid>
          <LeftRuler />
          <Canvas>
            <Band $h={20} $c="#d8d8d8" />
            <Page><MapDrawing /></Page>
            <Band $h={7} $c="#999" />
            <Band $h={13} $c="#d8d8d8" />
          </Canvas>
          <VScrollTrack><VThumb /></VScrollTrack>
        </WorkMid>
        <HRow><HTrack><HThumb /></HTrack></HRow>
      </Work>
      <Dock>
        <Tabs>
          <Tab $w={62} $h={23} $mr={1} $fs={9.5}>Items</Tab>
          <Tab $w={98} $h={16} $fs={10}>Undo History</Tab>
        </Tabs>
        <DockTitle $h={20}>Items<CloseBtn $t={4}><XIcon /></CloseBtn></DockTitle>
        <ListBox>
          <ListHead>
            <HeadCell><Eye /></HeadCell>
            <HeadCell><HeadLock /></HeadCell>
            <HeadCell $text>Item</HeadCell>
          </ListHead>
          <ListRow>
            <Check $s={19} $ml={1}><Tick /></Check>
            <Check $s={19} $ml={17} />
            <MapIconBox />
            <RowLabel>Map 1</RowLabel>
          </ListRow>
        </ListBox>
        <DockTitle $h={24} $pt={7}>Item Properties<CloseBtn $t={8}><XIcon /></CloseBtn></DockTitle>
        <MapBand>Map 1</MapBand>
        <PropBar>
          {flowRow([
            { c: 16, w: 20, n: <Refresh s={20} /> }, { c: 32, w: 1, sep: 1 }, { c: 50, w: 20, n: <PropIcon k="a" /> }, { c: 78, w: 20, n: <PropIcon k="b" /> },
            { c: 95, w: 1, sep: 1 }, { c: 112, w: 20, n: <PropIcon k="c" /> }, { c: 140, w: 20, n: <PropIcon k="d" /> }, { c: 157, w: 1, sep: 1 },
            { c: 174, w: 20, n: <PropIcon k="e" /> }, { c: 202, w: 20, n: <PropIcon k="f" /> }, { c: 219, w: 1, sep: 1 }, { c: 236, w: 16, n: <PropIcon k="g" /> }, { c: 264, w: 18, n: <PropIcon k="h" /> },
          ])}
        </PropBar>
        <PropGroup>
          <PropBody>
            <GroupHead><Tri $c="#2a2a2a" />Main Properties</GroupHead>
            <FormRow $h={24} $mb={10}>
              <FormLabel>Scale</FormLabel><Input>679141</Input><DdIcon $ml={10}><DataDefined /></DdIcon>
            </FormRow>
            <FormRow $h={24} $mb={10}>
              <FormLabel>Map rotation</FormLabel>
              <DarkField $w={228} $h={24}>0.00 °<svg width="6" height="12" viewBox="0 0 6 12"><path d="M3 0l3 6-3 6-3-6z" fill="#ccc" /></svg></DarkField>
              <DdIcon $ml={10}><DataDefined /></DdIcon>
            </FormRow>
            <FormRow $h={26} $mb={7}>
              <FormLabel>CRS</FormLabel>
              <DarkField $w={198} $h={26}>Use Project CRS<DownTri c="#ccc" /></DarkField>
              <SmallBtn><CrsBtn /></SmallBtn>
              <DdIcon $ml={10}><DataDefined /></DdIcon>
            </FormRow>
            <CheckRow><Check $s={19} $bg="#b0b0b0"><Tick s={17} /></Check>Draw map canvas items</CheckRow>
          </PropBody>
          <InnerScroll><InnerThumb /></InnerScroll>
        </PropGroup>
      </Dock>
    </Body>
    <StatusBar>
      <StatusText $ml={708} $w={106}>x: 0 mm</StatusText>
      <StatusText $w={106}>y: 35 mm</StatusText>
      <StatusText $w={107}>page: 1</StatusText>
      <ZoomCombo>68.8%<DownTri c="#ccc" /></ZoomCombo>
      <SliderTrack><SliderThumb /></SliderTrack>
    </StatusBar>
    <BottomEdge>
      <EdgePart $c="#e0e0e0" $w="727px" />
      <EdgePart $c="#1e1e1e" />
    </BottomEdge>
    <Overlay viewBox="0 0 1272 818">
      <ellipse cx="70" cy="270" rx="85" ry="33" fill="none" stroke="#f8ee00" strokeWidth="5" />
      <ellipse cx="1069" cy="538" rx="81" ry="18" fill="none" stroke="#f8ee00" strokeWidth="4" />
    </Overlay>
    <Tooltip>Move item content</Tooltip>
  </Root>
);

export default App;
